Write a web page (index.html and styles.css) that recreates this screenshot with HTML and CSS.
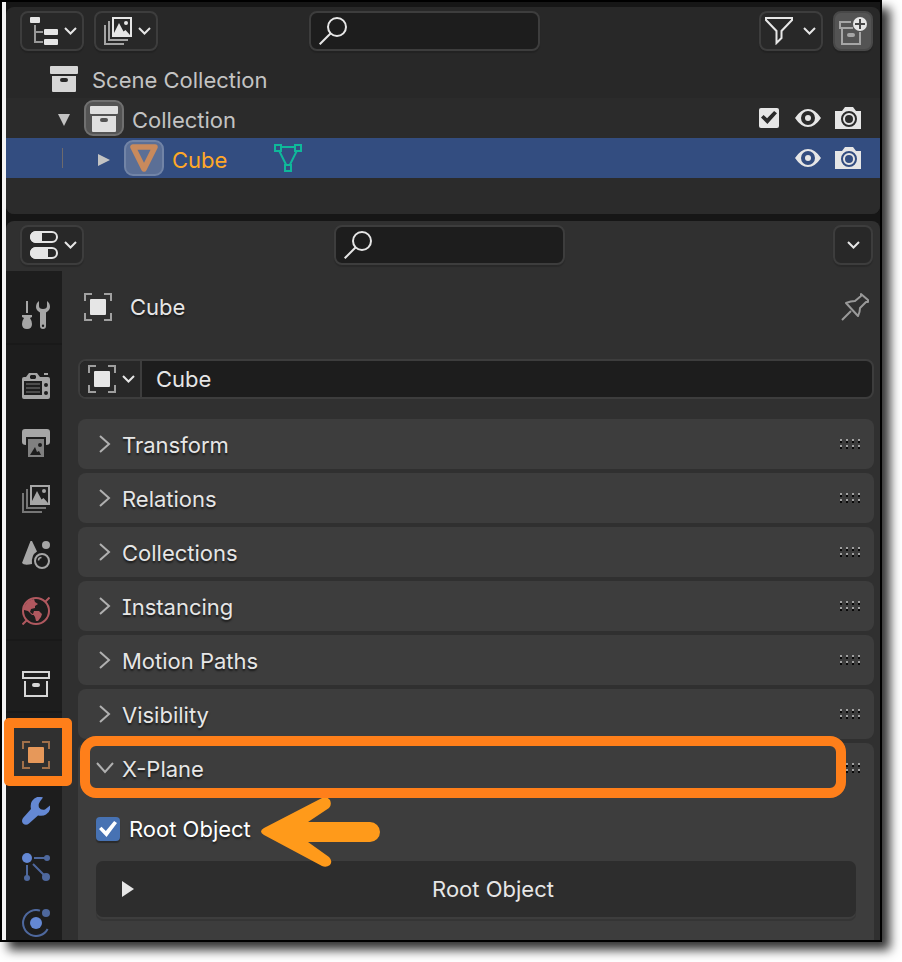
FILE: index.html
```html
<!DOCTYPE html>
<html lang="en">
<head>
<meta charset="utf-8">
<title>Object Properties</title>
<link rel="stylesheet" href="styles.css">
</head>
<body>
<svg class="sprite" aria-hidden="true">
  <symbol id="chevron" viewBox="0 0 13 8"><path d="M1 1l5.500 5.500L12 1" fill="none" stroke="currentColor" stroke-width="2"/></symbol>
  <symbol id="tree" viewBox="0 0 28 28"><path d="M5 8v17h8M5 15h8" fill="none" stroke="#999" stroke-width="2"/><g fill="currentColor"><rect width="10" height="6" rx="1"/><rect x="14" y="12" width="14" height="6" rx="1"/><rect x="14" y="22" width="14" height="6" rx="1"/></g></symbol>
  <symbol id="images" viewBox="0 0 28 28"><path d="M5 4v19h19M1 8v19h19" fill="none" stroke="currentColor" stroke-width="2" opacity=".65"/><rect x="9" y="1" width="18" height="18" fill="none" stroke="currentColor" stroke-width="2"/><path fill="currentColor" d="M9 18l6-12 4.500 8.500 2-1.500 4.500 5z"/><circle cx="22" cy="6" r="2" fill="currentColor"/></symbol>
  <symbol id="magnifier" viewBox="0 0 28 28"><g fill="none" stroke="currentColor" stroke-width="2"><circle cx="18" cy="10" r="9"/><path d="M11.500 16.500L.7 27.300"/></g></symbol>
  <symbol id="funnel" viewBox="0 0 28 28"><path d="M1 1h26v2l-10.500 11v7L11.500 26V14L1 3z" fill="none" stroke="currentColor" stroke-width="2"/></symbol>
  <symbol id="new-collection" viewBox="0 0 28 28"><path d="M12 5H1v6h13M3 11v16h18V15" fill="none" stroke="#a6a6a6" stroke-width="2"/><rect x="8" y="16" width="8" height="4" rx="2" fill="#a6a6a6"/><circle cx="21" cy="7" r="7" fill="#e6e6e6"/><path d="M21 2v10M16 7h10" stroke="#484848" stroke-width="2"/></symbol>
  <symbol id="archive" viewBox="0 0 28 28"><rect y="2" width="28" height="8" rx="1" fill="currentColor"/><path fill="currentColor" fill-rule="evenodd" d="M2 12h24v15q0 1-1 1H3q-1 0-1-1zM12 14q-2 0-2 2t2 2h4q2 0 2-2t-2-2z"/></symbol>
  <symbol id="archive-line" viewBox="0 0 28 28"><path d="M1 3h26v6H1zM3 12v15h22V12" fill="none" stroke="currentColor" stroke-width="2"/><rect x="10" y="14" width="8" height="4" rx="2" fill="currentColor"/></symbol>
  <symbol id="cone" viewBox="0 0 28 28"><path d="M3 3h22L14 25z" fill="none" stroke="currentColor" stroke-width="5.500" stroke-linejoin="round"/></symbol>
  <symbol id="mesh" viewBox="0 0 28 28"><path d="M8 3h12M5.500 7.500l6.500 13M22.500 7.500l-6.500 13M1 1h6v6H1zM21 1h6v6h-6zM11 21h6v6h-6z" fill="none" stroke="#0fb89a" stroke-width="2"/></symbol>
  <symbol id="eye" viewBox="0 0 26 18"><path fill="currentColor" fill-rule="evenodd" d="M0 9Q6 0 13 0t13 9q-6 9-13 9T0 9zM13 2a7 7 0 1 0 0 14 7 7 0 0 0 0-14z"/><circle cx="13" cy="9" r="3" fill="currentColor"/></symbol>
  <symbol id="camera" viewBox="0 0 26 22"><path fill="currentColor" fill-rule="evenodd" d="M0 4h7l3-4h8l3 4h5v18H0zM14 4a8 8 0 1 0 0 16 8 8 0 0 0 0-16z"/><path fill="currentColor" fill-rule="evenodd" d="M14 6a6 6 0 1 0 0 12 6 6 0 0 0 0-12zm0 2a4 4 0 1 1 0 8 4 4 0 0 1 0-8z"/></symbol>
  <symbol id="sliders" viewBox="0 0 28 28"><rect x="1" y="1" width="26" height="10" rx="5" fill="none" stroke="currentColor" stroke-width="2"/><rect x="1" y="17" width="26" height="10" rx="5" fill="none" stroke="currentColor" stroke-width="2"/><path fill="currentColor" d="M12 0v12H6A6 6 0 0 1 6 0zM18 16v12H6a6 6 0 0 1 0-12z"/></symbol>
  <symbol id="object" viewBox="0 0 28 28"><path d="M1 8V1h7M20 1h7v7M27 20v7h-7M8 27H1v-7" fill="none" stroke="currentColor" stroke-width="2" opacity=".62"/><rect x="6" y="6" width="16" height="16" rx="1" fill="currentColor"/></symbol>
  <symbol id="pin" viewBox="0 0 28 28"><path d="M1 27l9-9M5 10q5-2 9-2l6-5V1l7 6v2h-2l-6 6q0 4-2 8z" fill="none" stroke="currentColor" stroke-width="2" stroke-linejoin="round"/></symbol>
  <symbol id="tool" viewBox="0 0 28 28"><path d="M4 0h2v12H4zM0 14h10v2L8 17q2 3 2 6 0 5-5 5t-5-5q0-3 2-6l-2-1z" fill="currentColor"/><path fill="currentColor" fill-rule="evenodd" d="M17 0v5q0 3 4 3t4-3V0q3 2 3 6 0 3-4 5.500V25q0 3-3 3t-3-3V11.500Q14 9 14 6q0-4 3-6zM21 23.500a1.200 1.200 0 1 0 0 2.400 1.200 1.200 0 0 0 0-2.400z"/></symbol>
  <symbol id="render" viewBox="0 0 28 28"><path fill="currentColor" fill-rule="evenodd" d="M2 4h2l3-4h8l3 4h8q2 0 2 2v18q0 2-2 2H2q-2 0-2-2V6q0-2 2-2zM9 2L8 3v2l1 1h4l1-1V3l-1-1zM2 8v14h18V8zM24 10a2 2 0 1 0 0 4 2 2 0 0 0 0-4zm0 8a2 2 0 1 0 0 4 2 2 0 0 0 0-4z"/><path d="M22 1h4" stroke="currentColor" stroke-width="2"/><path d="M4 11h14M4 15h14M4 19h14" stroke="#4c4c4c" stroke-width="2"/></symbol>
  <symbol id="output" viewBox="0 0 28 28"><path fill="currentColor" d="M3 0h22q3 0 3 3v10q0 3-4 3V8H4v8q-4 0-4-3V3q0-3 3-3z"/><path fill="#808080" fill-rule="evenodd" d="M6 10h16v18H6zM8 26h11l-2-4-2 1-2-5zM18 14a2 2 0 1 0 0 4 2 2 0 0 0 0-4z"/></symbol>
  <symbol id="scene" viewBox="0 0 28 28"><path fill="currentColor" d="M8.500 0h1.500l5 10.500Q9 14 10 23q-8 2-10-1z"/><circle cx="24" cy="4" r="4" fill="currentColor"/><circle cx="20" cy="20" r="7" fill="none" stroke="currentColor" stroke-width="2"/><path d="M16.500 19.500q0-3 3-3" fill="none" stroke="currentColor" stroke-width="1.500"/></symbol>
  <symbol id="world" viewBox="0 0 28 28"><circle cx="14" cy="14" r="13" fill="none" stroke="currentColor" stroke-width="2"/><path d="M.5 27.500l4-4M23.500 4.500l4-4" stroke="currentColor" stroke-width="2"/><path fill="currentColor" d="M2 10l4-6 6-2 1 3 3 2-3 2v2l-4 1-1 3 4 3-2 0-4-4-4-1zM12 14h5l3 3-1 3-3 4h-2l-1-4-2-3z"/></symbol>
  <symbol id="wrench" viewBox="0 0 28 28"><path fill="currentColor" d="M21 .5Q14-2 10 4q-2 3-1 8L1 21q-2 3 0 5.500 3 2.500 6 0l9-8q5 1 8-1 5-3 4-9l-5 4q-4 1-6-2-1-3 1-6z"/></symbol>
  <symbol id="particles" viewBox="0 0 28 28"><g opacity=".7" fill="currentColor"><circle cx="25" cy="5" r="3"/><circle cx="5" cy="25" r="3"/><circle cx="24" cy="24" r="4"/><path d="M12 5h12M5 12v12M11 11l13 13" stroke="currentColor" stroke-width="2"/></g><circle cx="5" cy="5" r="5" fill="currentColor"/></symbol>
  <symbol id="physics" viewBox="0 0 28 28"><g opacity=".7"><path d="M18 1.600A13 13 0 1 0 25.600 20" fill="none" stroke="currentColor" stroke-width="2"/><circle cx="24" cy="4" r="4" fill="currentColor"/></g><circle cx="14" cy="14" r="6" fill="currentColor"/></symbol>
  <symbol id="caret" viewBox="0 0 12 18"><path d="M1 1l9 8-9 8" fill="none" stroke="currentColor" stroke-width="2"/></symbol>
  <symbol id="triangle" viewBox="0 0 12 12" preserveAspectRatio="none"><path d="M0 0l12 6-12 6z" fill="currentColor"/></symbol>
  <symbol id="grip" viewBox="0 0 22 12"><path d="M1 1h20M1 7h20" stroke="#a0a0a0" stroke-width="2" stroke-dasharray="2 4"/><path d="M1 3h20M1 9h20" stroke="#080808" stroke-width="2" stroke-dasharray="2 4"/></symbol>
</svg>

<main class="window">
  <section class="editor outliner" aria-label="Outliner">
    <header class="toolbar">
      <button class="menu-button" aria-label="Editor type"><svg class="icon"><use href="#tree"/></svg><svg class="chevron"><use href="#chevron"/></svg></button>
      <button class="menu-button" aria-label="Display mode"><svg class="icon"><use href="#images"/></svg><svg class="chevron"><use href="#chevron"/></svg></button>
      <div class="search"><svg class="icon"><use href="#magnifier"/></svg><input type="search" aria-label="Filter outliner"></div>
      <button class="menu-button filter" aria-label="Filter"><svg class="icon"><use href="#funnel"/></svg><svg class="chevron"><use href="#chevron"/></svg></button>
      <button class="square-button raised" aria-label="New collection"><svg class="icon"><use href="#new-collection"/></svg></button>
    </header>
    <ul class="tree">
      <li class="row">
        <span class="cell"><svg class="icon"><use href="#archive"/></svg></span>
        <span class="name">Scene Collection</span>
      </li>
      <li class="row alt">
        <button class="cell" aria-label="Collapse"><svg class="triangle open"><use href="#triangle"/></svg></button>
        <span class="cell badge"><svg class="icon"><use href="#archive"/></svg></span>
        <span class="name">Collection</span>
        <span class="toggles">
          <input class="include" type="checkbox" checked aria-label="Include collection">
          <button aria-label="Hide collection"><svg class="eye"><use href="#eye"/></svg></button>
          <button aria-label="Render collection"><svg class="camera"><use href="#camera"/></svg></button>
        </span>
      </li>
      <li class="row selected">
        <span class="cell"><span class="guide"></span></span>
        <button class="cell" aria-label="Expand"><svg class="triangle"><use href="#triangle"/></svg></button>
        <span class="cell badge mesh-object"><svg class="icon"><use href="#cone"/></svg></span>
        <span class="name">Cube</span>
        <svg class="icon data"><use href="#mesh"/></svg>
        <span class="toggles">
          <button aria-label="Hide Cube"><svg class="eye"><use href="#eye"/></svg></button>
          <button aria-label="Render Cube"><svg class="camera"><use href="#camera"/></svg></button>
        </span>
      </li>
      <li class="row alt filler"></li>
    </ul>
  </section>

  <section class="editor properties" aria-label="Properties">
    <header class="toolbar">
      <button class="menu-button" aria-label="Editor type"><svg class="icon"><use href="#sliders"/></svg><svg class="chevron"><use href="#chevron"/></svg></button>
      <div class="search"><svg class="icon"><use href="#magnifier"/></svg><input type="search" aria-label="Search properties"></div>
      <button class="square-button" aria-label="Options"><svg class="chevron"><use href="#chevron"/></svg></button>
    </header>
    <div class="body">
      <nav class="tabs" aria-label="Property tabs">
        <div class="group"><button aria-label="Tool"><svg class="icon"><use href="#tool"/></svg></button></div>
        <div class="group">
          <button aria-label="Render"><svg class="icon"><use href="#render"/></svg></button>
          <button aria-label="Output"><svg class="icon"><use href="#output"/></svg></button>
          <button aria-label="View layer"><svg class="icon"><use href="#images"/></svg></button>
          <button aria-label="Scene"><svg class="icon"><use href="#scene"/></svg></button>
          <button class="red" aria-label="World"><svg class="icon"><use href="#world"/></svg></button>
        </div>
        <div class="group"><button class="white" aria-label="Collection"><svg class="icon"><use href="#archive-line"/></svg></button></div>
        <div class="group">
          <button class="active" aria-label="Object"><svg class="icon"><use href="#object"/></svg></button>
          <button class="blue" aria-label="Modifiers"><svg class="icon"><use href="#wrench"/></svg></button>
          <button class="blue" aria-label="Particles"><svg class="icon"><use href="#particles"/></svg></button>
          <button class="blue" aria-label="Physics"><svg class="icon"><use href="#physics"/></svg></button>
        </div>
      </nav>
      <div class="content">
        <div class="context">
          <svg class="icon"><use href="#object"/></svg>
          <span>Cube</span>
          <button class="pin" aria-label="Pin"><svg class="icon"><use href="#pin"/></svg></button>
        </div>
        <div class="datablock">
          <button aria-label="Browse objects"><svg class="icon"><use href="#object"/></svg><svg class="chevron"><use href="#chevron"/></svg></button>
          <input type="text" value="Cube" aria-label="Object name">
        </div>
        <div class="panels">
          <section class="panel"><button class="title"><svg class="caret"><use href="#caret"/></svg><span>Transform</span><svg class="grip"><use href="#grip"/></svg></button></section>
          <section class="panel"><button class="title"><svg class="caret"><use href="#caret"/></svg><span>Relations</span><svg class="grip"><use href="#grip"/></svg></button></section>
          <section class="panel"><button class="title"><svg class="caret"><use href="#caret"/></svg><span>Collections</span><svg class="grip"><use href="#grip"/></svg></button></section>
          <section class="panel"><button class="title"><svg class="caret"><use href="#caret"/></svg><span>Instancing</span><svg class="grip"><use href="#grip"/></svg></button></section>
          <section class="panel"><button class="title"><svg class="caret"><use href="#caret"/></svg><span>Motion Paths</span><svg class="grip"><use href="#grip"/></svg></button></section>
          <section class="panel"><button class="title"><svg class="caret"><use href="#caret"/></svg><span>Visibility</span><svg class="grip"><use href="#grip"/></svg></button></section>
          <section class="panel expanded">
            <button class="title"><svg class="caret"><use href="#caret"/></svg><span>X-Plane</span><svg class="grip"><use href="#grip"/></svg></button>
            <div class="settings">
              <div class="option">
                <input type="checkbox" id="root-object" checked>
                <label for="root-object">Root Object</label>
                <svg class="arrow" viewBox="0 0 119 70" aria-hidden="true"><path d="M3 31L61 1Q66-1 69 3 71 8 68 11L47 25h62a10 10 0 0 1 0 20H47l21 15q4 4 1 8-4 3-8 1L3 38Q-3 34.500 3 31z" fill="#ff9a1a"/></svg>
              </div>
              <button class="subpanel"><svg class="triangle"><use href="#triangle"/></svg><span>Root Object</span></button>
            </div>
          </section>
        </div>
      </div>
    </div>
  </section>
</main>
</body>
</html>
```
FILE: styles.css
```css
*,
*::before,
*::after {
  box-sizing: border-box;
}

body {
  margin: 0;
  padding: 0 20px 20px 0;
  background: #fff;
  color: #e6e6e6;
  font: 22px/28px Inter, "Liberation Sans", sans-serif;
  font-feature-settings: "cv08";
}

button,
input {
  margin: 0;
  padding: 0;
  border: 0;
  background: none;
  color: inherit;
  font: inherit;
  font-feature-settings: inherit;
  outline: 0;
}

svg {
  display: block;
  flex: none;
}

.sprite {
  position: absolute;
  width: 0;
  height: 0;
}

.icon {
  width: 28px;
  height: 28px;
}

.chevron {
  width: 13px;
  height: 8px;
}

.triangle {
  width: 12px;
  height: 12px;
}

.triangle.open {
  transform: rotate(90deg);
}

.window {
  display: flex;
  flex-direction: column;
  gap: 7px;
  height: calc(100vh - 20px);
  overflow: hidden;
  padding-top: 5px;
  border: 2px solid #000;
  background: linear-gradient(90deg, #f4f4f4 4px, #161616 4px);
  padding-left: 4px;
  box-shadow: 8px 8px 10px rgba(0, 0, 0, 0.8);
}

.editor {
  border-radius: 8px;
  overflow: hidden;
}

/* Toolbars */

.toolbar {
  display: flex;
  align-items: center;
  gap: 10px;
  padding: 4px 7px 0 14px;
}

.menu-button,
.square-button,
.search {
  display: flex;
  align-items: center;
  height: 40px;
  border: 2px solid #3d3d3d;
  border-radius: 8px;
  background: #282828;
  box-shadow: 0 2px 1px rgba(0, 0, 0, 0.15);
}

.menu-button {
  width: 64px;
  gap: 6px;
  padding-left: 8px;
}

.menu-button.filter {
  gap: 10px;
  padding-left: 4px;
}

.square-button {
  width: 40px;
  justify-content: center;
}

.square-button.raised {
  background: #545454;
  border-color: #484848;
}

.search {
  width: 231px;
  padding-left: 8px;
  background: #1d1d1d;
}

.search input {
  flex: 1;
  min-width: 0;
  padding: 0 8px;
}

.outliner .search {
  margin-left: calc(16% + 5px);
  margin-right: auto;
}

.properties .search {
  margin-left: calc(28% + 1px);
  margin-right: auto;
}

/* Outliner */

.outliner {
  flex: none;
  background: #282828;
}

.tree {
  margin: 7px 0 0;
  padding: 0;
  list-style: none;
}

.row {
  display: flex;
  align-items: center;
  height: 40px;
  padding: 0 19px 0 38px;
  color: #c3c3c3;
}

.row.alt {
  background: #2b2b2b;
}

.row.selected {
  background: #334d80;
}

.row.filler {
  height: 36px;
}

.cell {
  display: flex;
  align-items: center;
  justify-content: center;
  width: 40px;
  height: 36px;
  color: #d6d6d6;
}

button.cell {
  padding: 3px 1px 0 0;
}

.cell .triangle {
  color: #c3c3c3;
}

.badge {
  border: 2px solid #707070;
  border-radius: 9px;
  background: #545454;
  color: #e0e0e0;
}

.badge.mesh-object {
  border-color: #7284a6;
  background: #5b6f96;
  color: #c98a5c;
}

.guide {
  width: 1px;
  height: 20px;
  margin-right: 3px;
  background: #6d6a6c;
}

.name {
  padding: 4px 0 0 8px;
}

.selected .name {
  color: #ffa827;
}

.data {
  margin-left: 47px;
}

.toggles {
  display: flex;
  align-items: center;
  gap: 14px;
  margin-left: auto;
  padding-bottom: 1px;
  color: #e6e6e6;
}

.eye {
  width: 26px;
  height: 18px;
}

.camera {
  width: 26px;
  height: 22px;
}

input[type="checkbox"] {
  display: grid;
  place-items: center;
  width: 24px;
  height: 24px;
  border-radius: 4px;
  background: #4772b3;
  box-shadow: 0 2px 1px rgba(0, 0, 0, 0.3);
  appearance: none;
}

input[type="checkbox"]::before {
  content: "";
  width: 18px;
  height: 16px;
  background: #fff;
  clip-path: polygon(0 50%, 14% 36%, 38% 62%, 84% 0, 100% 12%, 42% 100%);
}

input.include[type="checkbox"] {
  width: 20px;
  height: 20px;
  margin-right: 2px;
  border-radius: 2px;
  background: #e6e6e6;
  box-shadow: none;
}

input.include[type="checkbox"]::before {
  width: 16px;
  height: 13px;
  background: #2b2b2b;
  clip-path: polygon(0 50%, 16% 30%, 38% 56%, 82% 0, 100% 18%, 40% 100%);
}

/* Properties */

.properties {
  display: flex;
  flex: 1;
  flex-direction: column;
  min-height: 0;
  border-radius: 8px 8px 0 0;
  background: #303030;
  overflow: visible;
}

.body {
  display: flex;
  flex: 1;
  min-height: 0;
  margin-top: 6px;
}

.tabs {
  flex: none;
  width: 56px;
  background: #1d1d1d;
  color: #a6a6a6;
}

.group {
  padding-top: 16px;
  box-shadow: 0 2px 0 #191919;
}

.tabs button {
  position: relative;
  display: flex;
  align-items: center;
  width: 100%;
  height: 56px;
  padding-left: 16px;
}

.tabs .white {
  color: #d6d6d6;
}

.tabs .red {
  color: #b0585f;
}

.tabs .blue {
  color: #6488d4;
}

.tabs .active {
  background: linear-gradient(90deg, transparent 8px, #303030 8px);
  color: #e6985a;
}

/* Callout frames drawn over the interface */

.active::after,
.expanded::after {
  content: "";
  position: absolute;
  border: 10px solid #ff7f1a;
}

.active::after {
  inset: -9px -10px -3px -2px;
  border-radius: 5px;
}

.expanded::after {
  top: -7px;
  right: 28px;
  left: 2px;
  height: 62px;
  border-radius: 16px;
}

.content {
  display: flex;
  flex: 1;
  flex-direction: column;
  min-width: 0;
  padding: 22px 6px 0 16px;
}

.context {
  display: flex;
  align-items: center;
  gap: 18px;
  padding: 0 5px 0 6px;
  text-shadow: 0 2px 2px rgba(0, 0, 0, 0.5);
}

.pin {
  margin-left: auto;
  color: #999;
}

.datablock {
  display: flex;
  flex: none;
  height: 40px;
  margin-top: 38px;
  border: 2px solid #3d3d3d;
  border-radius: 8px;
  background: #1d1d1d;
  overflow: hidden;
}

.datablock button {
  display: flex;
  align-items: center;
  gap: 6px;
  padding: 0 5px 0 8px;
  border-right: 2px solid #3d3d3d;
  background: #282828;
}

.datablock input {
  flex: 1;
  min-width: 0;
  padding: 0 14px;
}

.panels {
  display: flex;
  flex: 1;
  flex-direction: column;
  gap: 4px;
  min-height: 0;
  margin-top: 20px;
}

.panel {
  flex: none;
  border-radius: 8px;
  background: #3d3d3d;
}

.panel.expanded {
  position: relative;
  flex: 1;
  border-radius: 8px 8px 0 0;
}

.title {
  display: flex;
  align-items: center;
  gap: 11px;
  width: 100%;
  height: 50px;
  padding: 2px 13px 0 21px;
  text-shadow: 0 2px 2px rgba(0, 0, 0, 0.6);
}

.caret {
  width: 12px;
  height: 18px;
  margin-bottom: 2px;
  color: #b0b0b0;
}

.expanded .caret {
  transform: rotate(90deg);
}

.grip {
  width: 22px;
  height: 12px;
  margin-left: auto;
}

.settings {
  padding: 24px 18px 0;
}

.option {
  position: relative;
  display: flex;
  align-items: center;
  gap: 9px;
  width: fit-content;
  height: 24px;
  color: #fff;
  text-shadow: 0 2px 2px rgba(0, 0, 0, 0.5);
}

.arrow {
  position: absolute;
  top: -20px;
  left: calc(100% + 10px);
  width: 119px;
  height: 70px;
}

.subpanel {
  display: flex;
  align-items: center;
  width: 100%;
  height: 56px;
  margin-top: 20px;
  padding: 0 4px 0 26px;
  border-radius: 7px;
  background: #2d2d2d;
  box-shadow: 0 2px 0 #3d3d3d, 0 4px 0 #353535;
}

.subpanel .triangle {
  height: 16px;
}

.subpanel span {
  flex: 1;
}
```
